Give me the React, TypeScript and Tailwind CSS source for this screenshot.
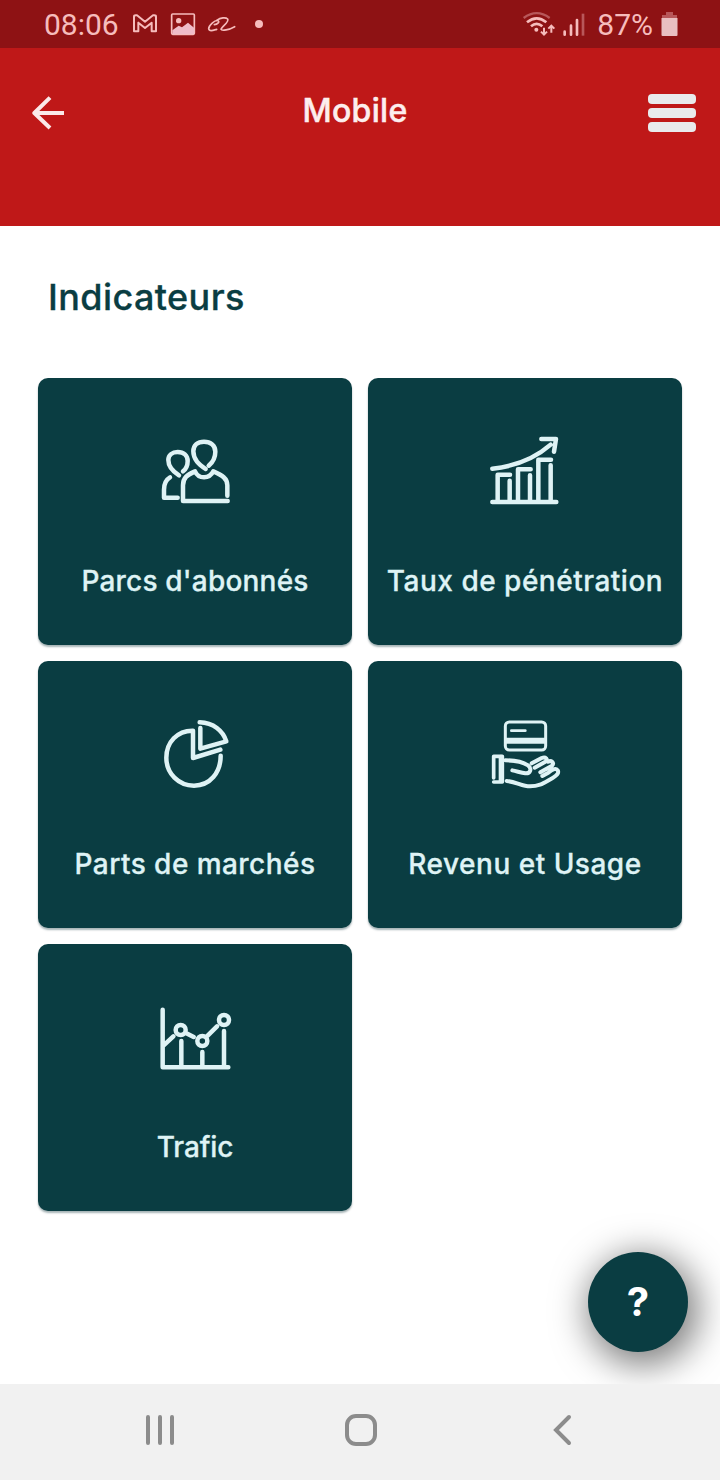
import type { ReactNode } from 'react'

type CardProps = { label: string; tracking: string; top?: number; children: ReactNode }

function Card({ label, tracking, top = 0, children }: CardProps) {
  return (
    <button className="flex h-[267px] flex-col items-center rounded-[10px] bg-[#0a3d42] pt-[47px] shadow-[0_2px_2px_rgba(0,40,45,0.35)]">
      <svg
        width="90"
        height="90"
        viewBox={`0 ${-top} 270 270`}
        className="shrink-0 overflow-visible"
        fill="none"
        stroke="#dff3f5"
        strokeWidth="13.5"
        strokeLinecap="round"
        strokeLinejoin="round"
      >
        {children}
      </svg>
      <span className={`mt-[46px] whitespace-nowrap text-[28px] leading-[40px] font-medium text-[#dff3f5] [-webkit-text-stroke:0.3px_#dff3f5] ${tracking}`}>{label}</span>
    </button>
  )
}

function StatusBar() {
  return (
    <div className="flex h-12 items-center bg-[#8e1214] pr-[42px] pl-11 font-[Roboto,sans-serif] text-[30px] leading-[48px] text-[#f6bcbc]">
      <span className="mt-px w-[75px] whitespace-nowrap">08:06</span>
      <svg className="ml-[9px]" width="140" height="48" viewBox="384 0 420 144" fill="none" stroke="#f6bcbc" strokeLinejoin="round">
        <path d="M402 94V50Q402 46 407 46H411L435 65L459 46H463Q468 46 468 50V94H455V68L435 84L415 68V94Z" strokeWidth="6" />
        <rect x="515" y="42" width="68" height="61" rx="3" strokeWidth="5" />
        <path d="M517 91L536 77L546 82L564 68L582 83V102H517Z" fill="#efbcc8" stroke="none" />
        <circle cx="536" cy="62" r="8" fill="#f6bcbc" stroke="none" />
        <path d="M643 74C653 73 660 65 654 62C645 59 626 76 626 86C628 96 640 91 650 88" strokeWidth="5" strokeLinecap="round" />
        <path d="M650 61C662 53 677 51 683 57C689 66 664 80 663 88C665 94 688 89 704 80" strokeWidth="5" strokeLinecap="round" />
        <circle cx="777" cy="72" r="12" fill="#f6bcbc" stroke="none" />
      </svg>
      <svg className="ml-auto" width="66" height="48" viewBox="66 0 198 144" fill="none" stroke="#f6bcbc" strokeWidth="8">
        <path d="M71 54Q110 25 149 54" stroke="#b8575a" strokeWidth="7" />
        <path d="M81 67Q110 43 139 67M93 79Q110 64 127 79" />
        <circle cx="109" cy="89" r="6" fill="#f6bcbc" stroke="none" />
        <path d="M132 83V104M123 95L132 104L141 95M154 98V78M145 86L154 77L163 86" strokeWidth="6" />
        <path d="M194 95V104M213 77V104M231 60V104" strokeWidth="8" strokeLinecap="round" />
        <path d="M249 41V107" stroke="#b8575a" strokeWidth="8" />
      </svg>
      <span className="mt-px ml-[9px] whitespace-nowrap">87%</span>
      <svg className="ml-2" width="17" height="48" viewBox="0 0 17 48" fill="#e9bfc1">
        <path d="M5 12H12V15H16V18H1V15H5Z" fill="#b8575a" />
        <path d="M0.5 18H16.5V35Q16.5 36 15.5 36H1.5Q.5 36 .5 35Z" />
      </svg>
    </div>
  )
}

function Header() {
  return (
    <header className="grid h-[178px] grid-cols-[80px_1fr_80px] items-start bg-[#bf1818] pt-10 pr-6 pl-8">
      <svg width="48" height="50" viewBox="96 264 144 150" fill="none" stroke="#fbe9e9" strokeWidth="12">
        <path d="M192 339H102M150 293L103 339L150 384" strokeLinejoin="round" />
      </svg>
      <h1 className="mt-[3px] mr-[18px] text-center whitespace-nowrap text-[32px] leading-[40px] font-medium tracking-[0.3px] text-[#fdeeee] [-webkit-text-stroke:0.5px_#fdeeee]">Mobile</h1>
      <div className="mt-[6px] flex flex-col items-end gap-[4px]">
        <i className="h-[10px] w-12 rounded-[4px] bg-[#e9eaec]" />
        <i className="h-[10px] w-12 rounded-[4px] bg-[#e9eaec]" />
        <i className="h-[10px] w-12 rounded-[4px] bg-[#e9eaec]" />
      </div>
    </header>
  )
}

export default function App() {
  return (
    <div className="flex h-[1480px] w-[720px] flex-col overflow-hidden bg-white font-[Inter,sans-serif]">
      <StatusBar />
      <Header />
      <main className="relative flex-1 overflow-hidden px-[38px] pt-[47px]">
        <h2 className="pl-[10px] text-[36px] leading-[48px] font-medium tracking-[0.4px] text-[#0a3d42] [-webkit-text-stroke:0.3px_#0a3d42]">Indicateurs</h2>
        <div className="mt-[57px] grid grid-cols-2 gap-4">
          <Card label="Parcs d'abonnés" tracking="tracking-[0.2px]">
            <path d="M167 132C147 118 130 104 130 79C130 61 143 50 162 50C182 50 196 62 196 80C196 98 188 112 176 122" />
            <path d="M87 151C68 139 55 124 55 105C55 90 67 81 83 81C101 81 113 91 113 108C113 122 108 132 99 139" />
            <path d="M60 157C48 164 42 176 42 194V218H83M232 212V181C232 160 217 151 190 139C178 163 146 163 135 139C111 150 99 158 99 181V228H233" />
          </Card>
          <Card label="Taux de pénétration" tracking="tracking-[0.5px]">
            <path d="M37 131C113 123 165 100 212 59M184 42H228L222 80M37 231H229M53 226V149H90M89 167V226M114 226V133H152M150 151V226M175 226V104H213M212 121V226" />
          </Card>
          <Card label="Parts de marchés" tracking="tracking-[0.45px]" top={6}>
            <path d="M129 62C82 61 49 97 49 143C49 191 86 227 132 227C180 227 212 188 212 137M129 62V144L211 119" />
            <path d="M149 37C190 38 219 62 229 94L151 116V54" />
          </Card>
          <Card label="Revenu et Usage" tracking="tracking-[0.5px]" top={6}>
            <rect x="76" y="36" width="121" height="84" rx="12" strokeWidth="9" />
            <path d="M78 92H195" strokeWidth="18" strokeLinecap="butt" />
            <path d="M94 62H136" strokeWidth="8" />
            <path d="M41 204V139H67V216H41" strokeWidth="11" />
            <path d="M63 141V212" strokeWidth="14" />
            <path d="M76 151C105 151 127 155 144 166C157 176 151 191 136 190C124 188 111 184 97 181M80 213C108 215 126 229 150 229C181 229 192 218 219 203C233 195 237 188 233 181C229 173 219 177 205 188L187 198M155 160L185 144C197 139 206 148 196 155L164 173M204 155C214 150 225 159 216 167L181 187" strokeWidth="12" />
          </Card>
          <Card label="Trafic" tracking="tracking-[-0.1px]" top={12}>
            <path d="M38 44V217H235M41 151L70 124M112 116L131 126M173 122L201 94M94 138V215M157 171V215M222 108V215" />
            <circle cx="92" cy="105" r="15" />
            <circle cx="157" cy="138" r="15" />
            <circle cx="222" cy="75" r="15" />
          </Card>
        </div>
        <button className="absolute right-8 bottom-8 flex size-[100px] items-center justify-center rounded-full bg-[#0a3d42] shadow-[5px_8px_36px_5px_rgba(0,0,0,0.52)]">
          <span className="text-[40px] leading-[48px] font-bold text-white">?</span>
        </button>
      </main>
      <nav className="flex h-24 items-start justify-between bg-[#f1f1f1] px-[140px] pt-[26px]">
        <svg width="40" height="40" viewBox="0 0 40 40" stroke="#8c8c8c" strokeWidth="4" strokeLinecap="round">
          <path d="M8 7V33M20 7V33M32 7V33" />
        </svg>
        <svg width="40" height="40" viewBox="0 0 40 40" fill="none" stroke="#8c8c8c" strokeWidth="4">
          <rect x="7" y="6" width="28" height="28" rx="9" />
        </svg>
        <svg width="40" height="40" viewBox="0 0 40 40" fill="none" stroke="#8c8c8c" strokeWidth="4" strokeLinecap="round">
          <path d="M29 7L16 20L29 33" />
        </svg>
      </nav>
    </div>
  )
}
